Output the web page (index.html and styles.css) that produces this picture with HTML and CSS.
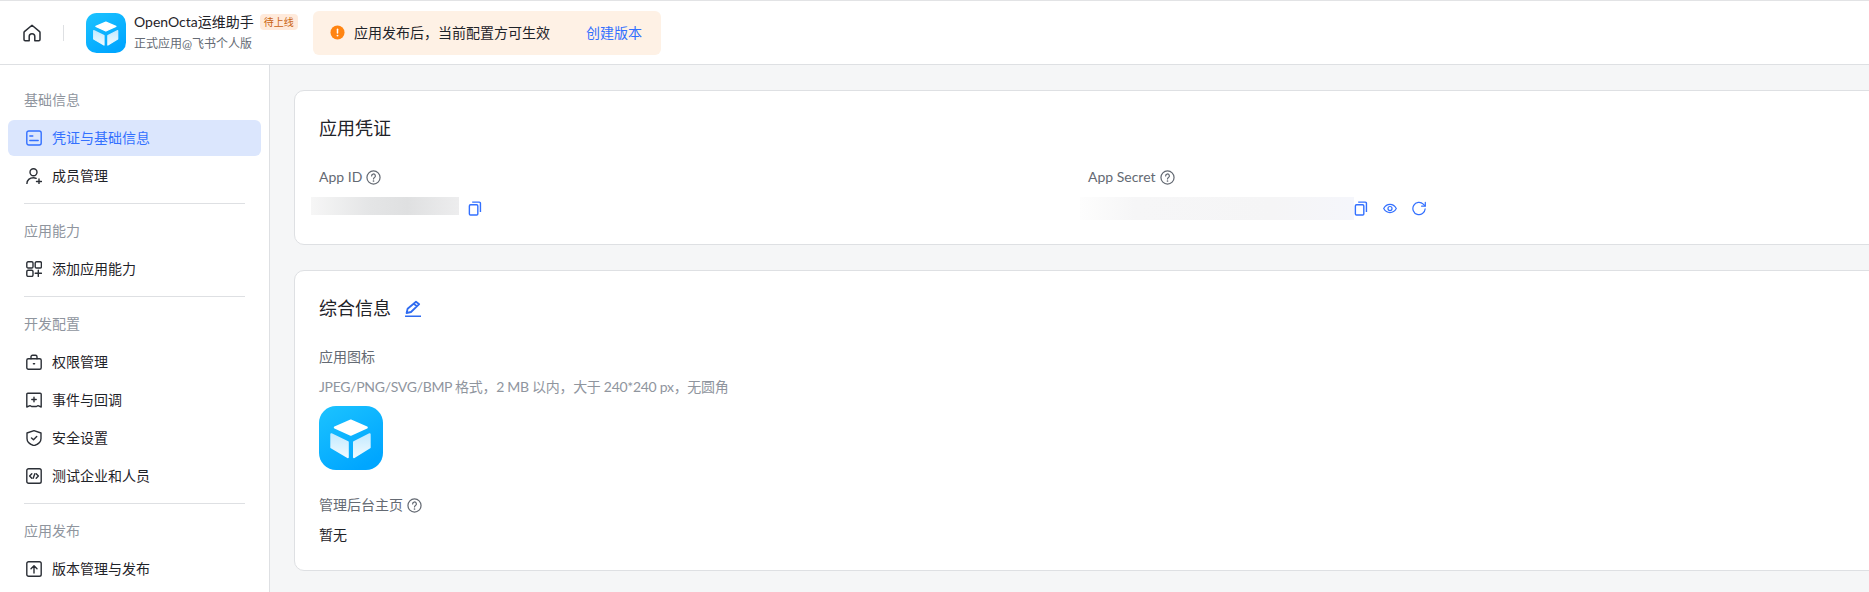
FILE: index.html
```html
<!DOCTYPE html>
<html lang="zh-CN">
<head>
  <meta charset="UTF-8">
  <meta name="viewport" content="width=device-width, initial-scale=1.0">
  <title>OpenOcta运维助手 - 凭证与基础信息</title>
  <link rel="stylesheet" href="styles.css">
</head>
<body>
  <svg class="defs" width="0" height="0" aria-hidden="true">
    <defs>
      <linearGradient id="logo-bg" x1="0" y1="0" x2="0.6" y2="1">
        <stop offset="0" stop-color="#1cc3ff"/>
        <stop offset="1" stop-color="#00a6ff"/>
      </linearGradient>
      <linearGradient id="logo-face" x1="0" y1="0" x2="0" y2="1">
        <stop offset="0" stop-color="#c4eaff"/>
        <stop offset="1" stop-color="#effaff"/>
      </linearGradient>
      <symbol id="logo" viewBox="0 0 64 64">
        <rect width="64" height="64" rx="17" fill="url(#logo-bg)"/>
        <path d="M31.800 14.500 47.800 21.500 31.800 28.800 15.800 21.500z" fill="#fff" stroke="#fff" stroke-width="2" stroke-linejoin="round"/>
        <path d="M12.300 28.200 28.800 36.200V51.200L12.300 41.500z" fill="url(#logo-face)" stroke="url(#logo-face)" stroke-width="2" stroke-linejoin="round"/>
        <path d="M50.700 28.200 35 36.200V51.200L50.700 41.500z" fill="url(#logo-face)" stroke="url(#logo-face)" stroke-width="2" stroke-linejoin="round"/>
      </symbol>
      <symbol id="help" viewBox="0 0 16 16">
        <circle cx="8" cy="8" r="7" fill="none" stroke="currentColor" stroke-width="1.300"/>
        <path d="M6 6.300a2 2 0 1 1 3 1.700c-.6.400-1 .8-1 1.500" fill="none" stroke="currentColor" stroke-width="1.300" stroke-linecap="round"/>
        <circle cx="8" cy="11.700" r=".9" fill="currentColor"/>
      </symbol>
      <symbol id="copy" viewBox="0 0 14 16">
        <rect x="1" y="4" width="9" height="11" rx="1.200" fill="none" stroke="currentColor" stroke-width="1.500"/>
        <path d="M4 1.200h7.600a1.200 1.200 0 0 1 1.200 1.200v9.400" fill="none" stroke="currentColor" stroke-width="1.500"/>
      </symbol>
    </defs>
  </svg>

  <header class="topbar">
    <svg class="home-icon" viewBox="0 0 18 18" fill="none" stroke="#2b2f36" stroke-width="1.500" stroke-linejoin="round" stroke-linecap="round">
      <path d="M9 1.200 1.400 7.600c-.3.300-.4.600-.4 1V15.600a1.200 1.200 0 0 0 1.200 1.200H6.200V12.500a2.800 2.800 0 0 1 5.600 0v4.300h4a1.200 1.200 0 0 0 1.200-1.200V8.600c0-.4-.1-.7-.4-1z"/>
    </svg>
    <span class="topbar-sep"></span>
    <svg class="app-logo"><use href="#logo"/></svg>
    <div class="app-meta">
      <div class="app-name-row">
        <span class="app-name">OpenOcta运维助手</span>
        <span class="tag">待上线</span>
      </div>
      <div class="app-sub">正式应用@飞书个人版</div>
    </div>
    <div class="notice">
      <svg class="notice-icon" viewBox="0 0 16 16">
        <circle cx="8" cy="8" r="7.500" fill="#ff8411"/>
        <rect x="7.200" y="3.800" width="1.600" height="5.400" rx=".8" fill="#fff"/>
        <circle cx="8" cy="11.300" r="1" fill="#fff"/>
      </svg>
      <span class="notice-text">应用发布后，当前配置方可生效</span>
      <a class="notice-link">创建版本</a>
    </div>
  </header>

  <div class="layout">
    <aside class="sidebar">
      <div class="nav-title">基础信息</div>
      <a class="nav-item active">
        <svg class="nav-icon" viewBox="0 0 16 16"><rect x=".8" y="1" width="14.400" height="14" rx="2"/><path d="M3.800 6h3M3.800 10.500h8.400"/></svg>
        凭证与基础信息
      </a>
      <a class="nav-item">
        <svg class="nav-icon" viewBox="0 0 16 16"><circle cx="7.500" cy="4.300" r="3.500"/><path d="M.9 15.700c0-3.700 2.700-5.900 6.600-5.900 1 0 1.900.2 2.700.5M10.500 13.500h5M13 11v5"/></svg>
        成员管理
      </a>
      <div class="nav-divider"></div>

      <div class="nav-title">应用能力</div>
      <a class="nav-item">
        <svg class="nav-icon" viewBox="0 0 16 16"><rect x=".8" y=".8" width="6.200" height="6.200" rx="1.300"/><rect x="9.200" y=".8" width="6.200" height="6.200" rx="1.300"/><rect x=".8" y="9.200" width="6.200" height="6.200" rx="1.300"/><path d="M9.200 12.300h6.200M12.300 9.200v6.200"/></svg>
        添加应用能力
      </a>
      <div class="nav-divider"></div>

      <div class="nav-title">开发配置</div>
      <a class="nav-item">
        <svg class="nav-icon" viewBox="0 0 16 16"><rect x=".8" y="4.800" width="14.400" height="10.400" rx="1.500"/><path d="M5 4.800V2.800A1.500 1.500 0 0 1 6.500 1.300h3A1.500 1.500 0 0 1 11 2.800v2M7.400 9.800h1.200"/></svg>
        权限管理
      </a>
      <a class="nav-item">
        <svg class="nav-icon" viewBox="0 0 16 16"><path d="M.8 2.300a1 1 0 0 1 1-1h12.400a1 1 0 0 1 1 1v12.700l-3.200-1.300-1.500.8H5.500l-1.500-.8-3.200 1.300zM8 5.300v4.400M5.800 7.500h4.400"/></svg>
        事件与回调
      </a>
      <a class="nav-item">
        <svg class="nav-icon" viewBox="0 0 16 16"><path d="M8 .7 15 3v5.500c0 3.600-2.900 5.900-7 7.100-4.100-1.200-7-3.500-7-7.100V3zM5.500 8l2 1.800 3.200-3.200"/></svg>
        安全设置
      </a>
      <a class="nav-item">
        <svg class="nav-icon" viewBox="0 0 16 16"><rect x=".8" y=".8" width="14.400" height="14.400" rx="1.800"/><path d="M5.800 5.800 3.600 8l2.200 2.200M10.200 5.800 12.400 8l-2.200 2.200M8.800 5.800 7.200 10.200"/></svg>
        测试企业和人员
      </a>
      <div class="nav-divider"></div>

      <div class="nav-title">应用发布</div>
      <a class="nav-item">
        <svg class="nav-icon" viewBox="0 0 16 16"><rect x=".8" y=".8" width="14.400" height="14.400" rx="1.800"/><path d="M8 12V5M5 7.800 8 4.800l3 3"/></svg>
        版本管理与发布
      </a>
    </aside>

    <main class="content">
      <section class="card">
        <h2 class="card-title">应用凭证</h2>
        <div class="cred-grid">
          <div>
            <div class="field-label">App ID <svg class="help-icon"><use href="#help"/></svg></div>
            <div class="cred-value">
              <span class="mask mask-id"></span>
              <svg class="action-icon"><use href="#copy"/></svg>
            </div>
          </div>
          <div>
            <div class="field-label">App Secret <svg class="help-icon"><use href="#help"/></svg></div>
            <div class="cred-value">
              <span class="mask mask-secret"></span>
              <svg class="action-icon"><use href="#copy"/></svg>
              <svg class="action-icon" viewBox="0 0 16 16" fill="none" stroke="currentColor" stroke-width="1.400"><path d="M.8 8c1.700-3 4.100-4.600 7.200-4.600s5.500 1.600 7.200 4.600c-1.700 3-4.100 4.600-7.200 4.600S2.500 11 .8 8z"/><circle cx="8" cy="8" r="2.300"/></svg>
              <svg class="action-icon" viewBox="0 0 16 16" fill="none" stroke="currentColor" stroke-width="1.400" stroke-linecap="round" stroke-linejoin="round"><path d="M15 8.500A7 7 0 1 1 12.900 3L15 5"/><path d="M15.200 1V5.300H11"/></svg>
            </div>
          </div>
        </div>
      </section>

      <section class="card">
        <h2 class="card-title">综合信息
          <svg class="edit-icon" viewBox="0 0 16 17" fill="none" stroke="#2f6bf0" stroke-linejoin="round" stroke-linecap="round"><path d="M11 1.800 14.200 4.200 6 12 1.600 13 2.600 8.800zM8.800 3.900 12 6.300" stroke-width="1.800"/><path d="M.5 16.200h15.500" stroke-width="1.500"/></svg>
        </h2>
        <div class="field-label">应用图标</div>
        <div class="hint">JPEG/PNG/SVG/BMP 格式，2 MB 以内，大于 240*240 px，无圆角</div>
        <svg class="big-logo"><use href="#logo"/></svg>
        <div class="field-label spaced">管理后台主页 <svg class="help-icon"><use href="#help"/></svg></div>
        <div class="field-value">暂无</div>
      </section>
    </main>
  </div>
</body>
</html>
```

FILE: styles.css
```css
* {
  margin: 0;
  padding: 0;
  box-sizing: border-box;
}

html, body {
  height: 592px;
  overflow: hidden;
}

body {
  font-family: Lato, "Noto Sans CJK SC", sans-serif;
  font-size: 14px;
  line-height: 22px;
  color: #1f2329;
  background: #fff;
  text-spacing-trim: space-all;
}

.defs {
  position: absolute;
}

.topbar {
  display: flex;
  align-items: center;
  height: 65px;
  padding-left: 23px;
  background: #fff;
  border-top: 1px solid #e2e3e5;
  border-bottom: 1px solid #dee0e3;
}

.home-icon {
  width: 18px;
  height: 18px;
}

.topbar-sep {
  width: 1px;
  height: 16px;
  margin: 0 22px;
  background: #dee0e3;
}

.app-logo {
  width: 40px;
  height: 40px;
}

.app-meta {
  margin-left: 8px;
  width: 179px;
}

.app-name-row {
  display: flex;
  align-items: center;
  height: 22px;
}

.app-name {
  font-size: 14px;
}

.tag {
  margin-left: 6px;
  padding: 0 4px;
  height: 16px;
  font-size: 10px;
  line-height: 16px;
  color: #c9610e;
  background: #ffeadb;
  border-radius: 4px;
}

.app-sub {
  margin-top: 1px;
  font-size: 12px;
  line-height: 20px;
  color: #646a73;
}

.notice {
  display: flex;
  align-items: center;
  width: 348px;
  height: 44px;
  padding-left: 17px;
  background: #fef1e5;
  border-radius: 6px;
}

.notice-icon {
  width: 15px;
  height: 15px;
}

.notice-text {
  margin-left: 9px;
}

.notice-link {
  margin-left: 36px;
  color: #3370ff;
}

.layout {
  display: flex;
  height: 527px;
}

.sidebar {
  flex: none;
  width: 270px;
  padding: 24px 8px 0;
  background: #fff;
  border-right: 1px solid #dee0e3;
}

.nav-title {
  margin: 0 16px 9px;
  color: #8f959e;
}

.nav-item {
  display: flex;
  align-items: center;
  height: 36px;
  margin-bottom: 2px;
  padding-left: 18px;
  border-radius: 6px;
}

.nav-item.active {
  color: #3370ff;
  background: #dbe6fd;
}

.nav-icon {
  flex: none;
  width: 16px;
  height: 16px;
  margin-right: 10px;
  fill: none;
  stroke: #2b2f36;
  stroke-width: 1.400;
  stroke-linecap: round;
  stroke-linejoin: round;
}

.active .nav-icon {
  stroke: #3370ff;
}

.nav-divider {
  height: 1px;
  margin: 9px 16px 16px;
  background: #dee0e3;
}

.content {
  flex: 1;
  min-width: 0;
  padding: 25px 0 0 24px;
  background: #f5f6f7;
  overflow: hidden;
}

.card {
  width: 1640px;
  margin-bottom: 25px;
  padding: 23px 24px 24px;
  background: #fff;
  border: 1px solid #dee0e3;
  border-radius: 10px;
}

.card-title {
  display: flex;
  align-items: center;
  margin-bottom: 24px;
  font-size: 18px;
  font-weight: 400;
  line-height: 28px;
}

.edit-icon {
  width: 16px;
  height: 17px;
  margin-left: 14px;
}

.cred-grid {
  display: grid;
  grid-template-columns: 769px 1fr;
}

.field-label {
  display: flex;
  align-items: center;
  color: #646a73;
}

.field-label.spaced {
  margin-top: 24px;
}

.help-icon {
  width: 15px;
  height: 15px;
  margin-left: 4px;
  color: #646a73;
}

.cred-value {
  display: flex;
  align-items: center;
  height: 23px;
  margin-top: 9px;
  color: #3370ff;
}

.mask {
  height: 100%;
}

.mask-id {
  width: 148px;
  height: 18px;
  margin: 0 9px 5px -8px;
  background: linear-gradient(90deg, #f6f6f6, #e4e5e6 40%, #dfe0e1 65%, #ededee);
}

.mask-secret {
  width: 274px;
  margin: 0 0 0 -8px;
  background: linear-gradient(90deg, #fdfdfd, #f6f6f7 20%, #f5f5f6 70%, #f5f6fb);
}

.action-icon {
  width: 14px;
  height: 15px;
  margin-right: 15px;
}

.hint {
  margin-top: 8px;
  color: #8f959e;
  letter-spacing: -.3px;
}

.big-logo {
  display: block;
  width: 64px;
  height: 64px;
  margin-top: 8px;
}

.field-value {
  margin-top: 8px;
}
```
